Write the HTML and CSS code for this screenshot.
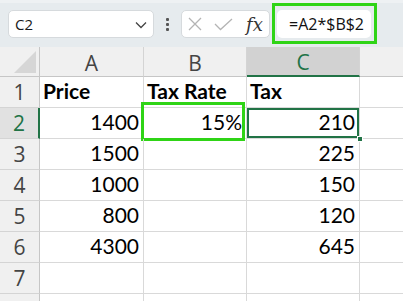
FILE: index.html
```html
<!DOCTYPE html>
<html>
<head>
<meta charset="utf-8">
<link rel="stylesheet" href="styles.css">
</head>
<body>
<div class="app">
  <div class="toolbar">
    <div class="namebox">
      <span class="name">C2</span>
      <svg class="chev" width="12" height="8" viewBox="0 0 12 8"><path d="M1 1.5 L6 6.5 L11 1.5" fill="none" stroke="#444" stroke-width="1.3"/></svg>
    </div>
    <div class="dots"><span></span><span></span><span></span></div>
    <div class="fxbox">
      <svg width="16" height="16" viewBox="0 0 16 16"><path d="M2 2 L14 14 M14 2 L2 14" stroke="#b4b4b4" stroke-width="1.3" fill="none"/></svg>
      <svg width="21" height="16" viewBox="0 0 21 16"><path d="M2 8 L7.5 13.5 L19 3" stroke="#b4b4b4" stroke-width="1.3" fill="none"/></svg>
      <span class="fx">fx</span>
    </div>
    <div class="formula">=A2*$B$2</div>
    <div class="mark mark-formula"></div>
  </div>
  <div class="sheet">
    <div class="corner"><div class="tri"></div></div>
    <div class="colhead">A</div>
    <div class="colhead">B</div>
    <div class="colhead active">C</div>
    <div class="colhead last"></div>

    <div class="rowhead">1</div>
    <div class="cell bold">Price</div>
    <div class="cell bold">Tax Rate</div>
    <div class="cell bold">Tax</div>
    <div class="cell last"></div>

    <div class="rowhead active">2</div>
    <div class="cell num">1400</div>
    <div class="cell num b2">15%<div class="mark mark-cell"></div></div>
    <div class="cell num sel">210<div class="handle"></div></div>
    <div class="cell last"></div>

    <div class="rowhead">3</div>
    <div class="cell num">1500</div>
    <div class="cell"></div>
    <div class="cell num">225</div>
    <div class="cell last"></div>

    <div class="rowhead">4</div>
    <div class="cell num">1000</div>
    <div class="cell"></div>
    <div class="cell num">150</div>
    <div class="cell last"></div>

    <div class="rowhead">5</div>
    <div class="cell num">800</div>
    <div class="cell"></div>
    <div class="cell num">120</div>
    <div class="cell last"></div>

    <div class="rowhead">6</div>
    <div class="cell num">4300</div>
    <div class="cell"></div>
    <div class="cell num">645</div>
    <div class="cell last"></div>

    <div class="rowhead">7</div>
    <div class="cell"></div>
    <div class="cell"></div>
    <div class="cell"></div>
    <div class="cell last"></div>

    <div class="rowhead"></div>
    <div class="cell"></div>
    <div class="cell"></div>
    <div class="cell"></div>
    <div class="cell last"></div>
  </div>
</div>
</body>
</html>
```
FILE: styles.css
```css
* { box-sizing: border-box; }
html, body { margin: 0; padding: 0; background: #fff; overflow: hidden; }
.app { width: 403px; height: 301px; overflow: hidden; }

.toolbar {
  position: relative;
  height: 47px;
  background: #e6ebee;
  border-top: 3px solid #eef1f3;
  display: flex;
  align-items: flex-start;
  padding: 7px 0 0 8px;
}
.namebox {
  width: 146px;
  height: 28px;
  background: #fff;
  border: 1px solid #d6dadd;
  border-radius: 5px;
  display: flex;
  align-items: center;
  justify-content: space-between;
  padding: 0 6px 0 6px;
  font-family: "Open Sans", sans-serif;
  font-size: 15px;
  color: #1a1a1a;
}
.chev { margin-top: 1px; }
.dots {
  width: 27px;
  height: 28px;
  display: flex;
  flex-direction: column;
  align-items: center;
  justify-content: center;
  gap: 2px;
}
.dots span { width: 3px; height: 3px; background: #555; border-radius: 1px; }
.fxbox {
  width: 89px;
  height: 28px;
  background: #fff;
  border: 1px solid #d6dadd;
  border-radius: 5px;
  display: flex;
  align-items: center;
  gap: 10px;
  padding-left: 5px;
}
.fx {
  font-family: "DejaVu Serif", "Liberation Serif", serif;
  font-style: italic;
  font-size: 18px;
  color: #333;
  margin-left: 2px;
}
.formula {
  margin-left: 7px;
  width: 94px;
  height: 28px;
  background: #fff;
  border-radius: 5px;
  font-family: "Open Sans", sans-serif;
  font-size: 16px;
  color: #111;
  display: flex;
  align-items: center;
  padding-left: 12px;
}
.mark { position: absolute; border: 3px solid #2fd416; pointer-events: none; }
.mark-formula { left: 272px; top: 0px; width: 105px; height: 41px; }

.sheet {
  display: grid;
  grid-template-columns: 40px 104px 103px 113px 1fr;
  grid-template-rows: 30px repeat(8, 31px);
  font-family: Lato, "Liberation Sans", sans-serif;
}
.corner, .colhead, .rowhead {
  background: #f0f0f0;
  color: #444;
}
.corner {
  border-right: 1px solid #c6c6c6;
  border-bottom: 1px solid #c6c6c6;
  position: relative;
}
.tri {
  position: absolute;
  right: 3px; bottom: 3px;
  width: 0; height: 0;
  border-left: 22px solid transparent;
  border-bottom: 22px solid #d6d6d6;
}
.colhead {
  border-right: 1px solid #d4d4d4;
  border-bottom: 1px solid #c6c6c6;
  display: flex;
  align-items: center;
  justify-content: center;
  font-family: "Open Sans", sans-serif;
  font-size: 21px;
  padding-top: 2px;
}
.colhead.active {
  background: #d2d2d2;
  color: #217346;
  border-bottom: 2px solid #217346;
}
.colhead.last { border-right: none; }
.rowhead {
  border-right: 1px solid #c6c6c6;
  border-bottom: 1px solid #d4d4d4;
  display: flex;
  align-items: center;
  justify-content: center;
  font-family: "Open Sans", sans-serif;
  font-size: 21px;
}
.rowhead.active {
  background: #e1e1e1;
  color: #217346;
  border-right: 2px solid #217346;
}
.cell {
  border-right: 1px solid #d9d9d9;
  border-bottom: 1px solid #d9d9d9;
  font-size: 21px;
  color: #000;
  display: flex;
  align-items: flex-end;
  padding: 0 3px 4px 3px;
  position: relative;
}
.cell.last { border-right: none; }
.cell.bold { font-weight: bold; }
.cell.num { justify-content: flex-end; padding-right: 4px; }
.cell.sel { box-shadow: inset 0 0 0 2px #217346; }
.handle {
  position: absolute;
  right: -4px; bottom: -4px;
  width: 6px; height: 6px;
  background: #217346;
  border: 1px solid #fff;
  z-index: 2;
}
.mark-cell { left: -3px; top: -6px; width: 104px; height: 39px; }
```
